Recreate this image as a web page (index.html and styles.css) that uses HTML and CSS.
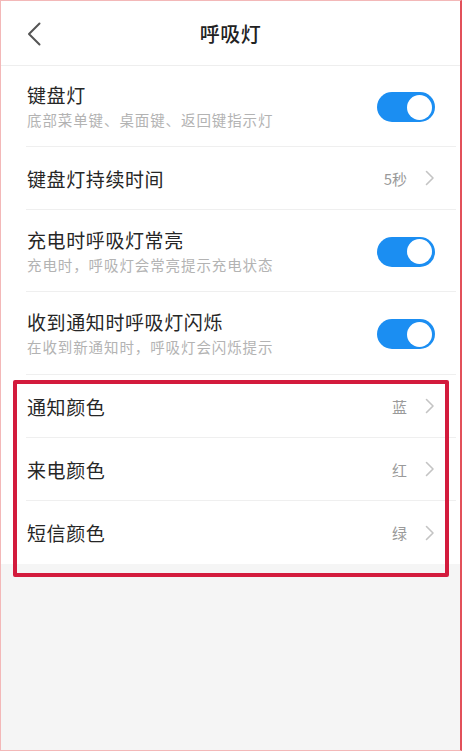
FILE: index.html
```html
<!DOCTYPE html>
<html lang="zh-CN">
<head>
<meta charset="utf-8">
<title>呼吸灯</title>
<link rel="stylesheet" href="styles.css">
</head>
<body>
<div class="page">
  <header class="header">
    <div class="back">
      <svg width="14" height="24" viewBox="0 0 14 24"><path d="M12.5 1.5 L2 12 L12.5 22.5" fill="none" stroke="#555" stroke-width="2" stroke-linecap="round" stroke-linejoin="round"/></svg>
    </div>
    <h1 class="title">呼吸灯</h1>
    <div></div>
  </header>
  <main class="list">
    <div class="row tall">
      <div class="text">
        <div class="label">键盘灯</div>
        <div class="sub">底部菜单键、桌面键、返回键指示灯</div>
      </div>
      <span class="toggle"><span class="knob"></span></span>
    </div>
    <div class="row">
      <div class="text"><div class="label">键盘灯持续时间</div></div>
      <div class="value">5秒<svg class="chev" width="10" height="16" viewBox="0 0 10 16"><path d="M1.5 1.5 L8 8 L1.5 14.5" fill="none" stroke="#c4c4c4" stroke-width="1.6" stroke-linecap="round" stroke-linejoin="round"/></svg></div>
    </div>
    <div class="row tall r3">
      <div class="text">
        <div class="label">充电时呼吸灯常亮</div>
        <div class="sub">充电时，呼吸灯会常亮提示充电状态</div>
      </div>
      <span class="toggle"><span class="knob"></span></span>
    </div>
    <div class="row tall r4">
      <div class="text">
        <div class="label">收到通知时呼吸灯闪烁</div>
        <div class="sub">在收到新通知时，呼吸灯会闪烁提示</div>
      </div>
      <span class="toggle"><span class="knob"></span></span>
    </div>
    <div class="row">
      <div class="text"><div class="label">通知颜色</div></div>
      <div class="value">蓝<svg class="chev" width="10" height="16" viewBox="0 0 10 16"><path d="M1.5 1.5 L8 8 L1.5 14.5" fill="none" stroke="#c4c4c4" stroke-width="1.6" stroke-linecap="round" stroke-linejoin="round"/></svg></div>
    </div>
    <div class="row">
      <div class="text"><div class="label">来电颜色</div></div>
      <div class="value">红<svg class="chev" width="10" height="16" viewBox="0 0 10 16"><path d="M1.5 1.5 L8 8 L1.5 14.5" fill="none" stroke="#c4c4c4" stroke-width="1.6" stroke-linecap="round" stroke-linejoin="round"/></svg></div>
    </div>
    <div class="row last">
      <div class="text"><div class="label">短信颜色</div></div>
      <div class="value">绿<svg class="chev" width="10" height="16" viewBox="0 0 10 16"><path d="M1.5 1.5 L8 8 L1.5 14.5" fill="none" stroke="#c4c4c4" stroke-width="1.6" stroke-linecap="round" stroke-linejoin="round"/></svg></div>
    </div>
  </main>
  <div class="highlight"></div>
</div>
</body>
</html>
```
FILE: styles.css
```css
* { box-sizing: border-box; }
html, body { margin: 0; padding: 0; }
body {
  font-family: "Noto Sans CJK SC", "Noto Sans", sans-serif;
  background: #f5f5f5;
}
.page {
  position: relative;
  width: 462px;
  height: 751px;
  background: #f5f5f5;
  border: 1px solid #f3b8b8;
  border-right: 2px solid #e2505a;
  overflow: hidden;
}
.header {
  height: 65px;
  background: #fff;
  border-bottom: 1px solid #eeeeee;
  display: grid;
  grid-template-columns: 1fr auto 1fr;
  align-items: center;
}
.back {
  padding-left: 26px;
  display: flex;
  align-items: center;
  padding-top: 1px;
}
.title {
  margin: 0;
  font-size: 20px;
  font-weight: 500;
  color: #222;
  letter-spacing: 0.5px;
}
.list {
  background: #fff;
}
.row {
  margin-left: 25px;
  margin-right: 4px;
  padding-left: 1px;
  padding-right: 21px;
  height: 63px;
  border-bottom: 1px solid #efefef;
  display: flex;
  align-items: center;
  justify-content: space-between;
}
.row.tall { height: 81px; }
.row.r3 { height: 82px; }
.row.r4 { height: 83px; }
.row.last { border-bottom: none; height: 63px; }
.text {
  display: flex;
  flex-direction: column;
}
.label {
  font-size: 19px;
  line-height: 25px;
  color: #262626;
  letter-spacing: 0.6px;
}
.sub {
  margin-top: 3px;
  font-size: 14.5px;
  line-height: 20px;
  color: #b3b3b3;
  letter-spacing: 0.9px;
}
.toggle {
  width: 58px;
  height: 30px;
  border-radius: 15px;
  background: #1b8ef2;
  display: flex;
  align-items: center;
  justify-content: flex-end;
  padding-right: 3px;
  margin-top: 2px;
}
.knob {
  width: 25px;
  height: 25px;
  border-radius: 50%;
  background: #fff;
}
.value {
  display: flex;
  align-items: center;
  gap: 18px;
  font-size: 15px;
  color: #9a9a9a;
}
.chev { display: block; }
.highlight {
  position: absolute;
  left: 12px;
  top: 379px;
  width: 436px;
  height: 197px;
  border: 4px solid #d31b3d;
  border-radius: 2px;
  pointer-events: none;
}
```
